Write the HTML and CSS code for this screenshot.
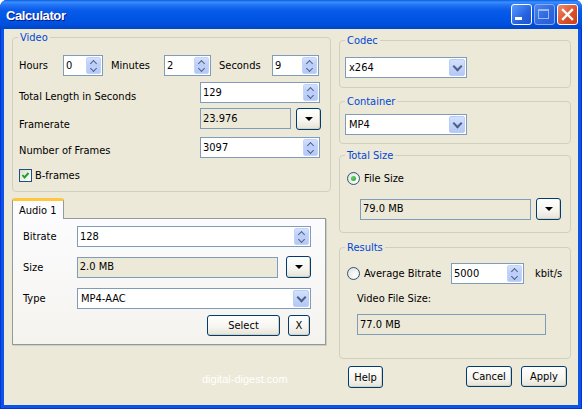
FILE: index.html
```html
<!DOCTYPE html>
<html lang="en">
<head>
    <meta charset="UTF-8">
    <title>Calculator</title>
    <link rel="stylesheet" href="styles.css">
</head>
<body>

<div class="window">
    <div class="titlebar">
        <span class="title">Calculator</span>
        <div class="caption">
            <span class="cap cap-min">
                <svg width="19" height="19" viewBox="0 0 19 19"><rect x="3" y="12" width="7" height="3" fill="#fff"/></svg>
            </span>
            <span class="cap cap-max">
                <svg width="19" height="19" viewBox="0 0 19 19"><rect x="3.5" y="4.5" width="10" height="9" fill="none" stroke="#9DB7F2"/><rect x="3" y="4" width="11" height="2" fill="#9DB7F2"/></svg>
            </span>
            <span class="cap cap-close">
                <svg width="19" height="19" viewBox="0 0 19 19"><path d="M5 5 L14 14 M14 5 L5 14" stroke="#fff" stroke-width="2.4" stroke-linecap="square"/></svg>
            </span>
        </div>
    </div>

    <div class="client">
        <div class="col-left">
            <fieldset class="group video">
                <legend>Video</legend>
                <div class="group-body">
                    <div class="row row-time">
                        <span class="lbl lbl-hours">Hours</span>
                        <div class="spin spin-hours"><span class="val">0</span><span class="spin-btns"><i class="up"></i><i class="down"></i></span></div>
                        <span class="lbl lbl-time">Minutes</span>
                        <div class="spin spin-time"><span class="val">2</span><span class="spin-btns"><i class="up"></i><i class="down"></i></span></div>
                        <span class="lbl lbl-time">Seconds</span>
                        <div class="spin spin-time"><span class="val">9</span><span class="spin-btns"><i class="up"></i><i class="down"></i></span></div>
                    </div>
                    <div class="row row-total">
                        <span class="lbl lbl-long">Total Length in Seconds</span>
                        <div class="spin spin-wide"><span class="val">129</span><span class="spin-btns"><i class="up"></i><i class="down"></i></span></div>
                    </div>
                    <div class="row row-fps">
                        <span class="lbl lbl-long">Framerate</span>
                        <div class="textbox disabled tb-fps">23.976</div>
                        <button class="btn drop"><span class="tri"></span></button>
                    </div>
                    <div class="row row-frames">
                        <span class="lbl lbl-long">Number of Frames</span>
                        <div class="spin spin-wide"><span class="val">3097</span><span class="spin-btns"><i class="up"></i><i class="down"></i></span></div>
                    </div>
                    <div class="row row-check">
                        <span class="check">
                            <svg width="11" height="11" viewBox="0 0 11 11"><path d="M2.5 5 L4.5 7.5 L8.5 3" fill="none" stroke="#21A121" stroke-width="2"/></svg>
                        </span>
                        <span>B-frames</span>
                    </div>
                </div>
            </fieldset>

            <div class="tabs">
                <div class="tab-strip"><span class="tab">Audio 1</span></div>
                <div class="tab-panel">
                    <div class="prow">
                        <span class="plbl">Bitrate</span>
                        <div class="spin spin-bitrate"><span class="val">128</span><span class="spin-btns"><i class="up"></i><i class="down"></i></span></div>
                    </div>
                    <div class="prow prow-size">
                        <span class="plbl">Size</span>
                        <div class="textbox disabled tb-size">2.0 MB</div>
                        <button class="btn drop"><span class="tri"></span></button>
                    </div>
                    <div class="prow prow-type">
                        <span class="plbl">Type</span>
                        <div class="combo combo-type"><span class="val">MP4-AAC</span><span class="combo-btn"></span></div>
                    </div>
                    <div class="prow prow-btns">
                        <button class="btn btn-select">Select</button>
                        <button class="btn btn-x">X</button>
                    </div>
                </div>
            </div>

            <div class="watermark">digital-digest.com</div>
        </div>

        <div class="col-right">
            <fieldset class="group codec">
                <legend>Codec</legend>
                <div class="group-body">
                    <div class="combo combo-main"><span class="val">x264</span><span class="combo-btn"></span></div>
                </div>
            </fieldset>

            <fieldset class="group container">
                <legend>Container</legend>
                <div class="group-body">
                    <div class="combo combo-main"><span class="val">MP4</span><span class="combo-btn"></span></div>
                </div>
            </fieldset>

            <fieldset class="group total">
                <legend>Total Size</legend>
                <div class="group-body">
                    <div class="radio-row">
                        <span class="radio on"></span>
                        <span>File Size</span>
                    </div>
                    <div class="row size-row">
                        <div class="textbox disabled tb-total">79.0 MB</div>
                        <button class="btn drop"><span class="tri"></span></button>
                    </div>
                </div>
            </fieldset>

            <fieldset class="group results">
                <legend>Results</legend>
                <div class="group-body">
                    <div class="radio-row bitrate-row">
                        <span class="radio"></span>
                        <span class="radio-text">Average Bitrate</span>
                        <div class="spin spin-abr"><span class="val">5000</span><span class="spin-btns"><i class="up"></i><i class="down"></i></span></div>
                        <span class="unit">kbit/s</span>
                    </div>
                    <div class="vfs-label">Video File Size:</div>
                    <div class="textbox disabled tb-vfs">77.0 MB</div>
                </div>
            </fieldset>

            <div class="dialog-buttons">
                <button class="btn btn-help">Help</button>
                <button class="btn btn-cancel">Cancel</button>
                <button class="btn btn-apply">Apply</button>
            </div>
        </div>
    </div>
</div>

</body>
</html>
```

FILE: styles.css
```css
* {
    box-sizing: border-box;
}

body {
    margin: 0;
    background: #ffffff;
    font-family: "DejaVu Sans Condensed", "DejaVu Sans", sans-serif;
    font-stretch: condensed;
    font-size: 11px;
    color: #000;
}

/* window frame */

.window {
    width: 582px;
    height: 409px;
    display: flex;
    flex-direction: column;
    background: #0B55E6;
    border-radius: 7px 7px 0 0;
    border: 1px solid #0831D9;
    border-top: none;
}

.titlebar {
    height: 29px;
    margin: 0 -1px;
    display: flex;
    align-items: center;
    padding: 0 4px 0 6px;
    border-radius: 7px 7px 0 0;
    background: linear-gradient(to bottom, #0A5CE0 0px, #3B8FFD 2px, #2274F5 5px, #0A5CEA 10px, #0055E6 18px, #0050DD 24px, #0047CE 28px);
}

.title {
    flex: 1;
    color: #fff;
    font-family: "Liberation Sans", Arial, sans-serif;
    font-weight: bold;
    font-size: 13px;
    letter-spacing: -0.4px;
    text-shadow: 1px 1px 0 #0A1883;
    padding-top: 1px;
}

.caption {
    display: flex;
    gap: 2px;
}

.cap {
    width: 21px;
    height: 21px;
    border: 1px solid #fff;
    border-radius: 3px;
    display: flex;
}

.cap-min {
    background: linear-gradient(135deg, #5A9BFF, #2663E0 60%, #1C55D0);
}

.cap-max {
    border-color: #8DAAF0;
    background: linear-gradient(135deg, #4C86F0, #2E66DE 60%, #2A5CD6);
}

.cap-close {
    background: linear-gradient(135deg, #ED8E6B, #DA4E27 60%, #C9401A);
}

.client {
    flex: 1;
    margin: 0 3px 3px;
    background: #ECE9D8;
    display: flex;
}

.col-left {
    width: 319px;
    margin-left: 8px;
    padding-top: 2px;
}

.col-right {
    width: 232px;
    margin-left: 8px;
    padding-top: 5px;
}

/* group boxes */

.group {
    border: 1px solid #D0D0BF;
    border-radius: 4px;
    margin: 0;
    padding: 0;
    min-width: 0;
}

.group legend {
    color: #0046D5;
    line-height: 13px;
    margin-left: 5px;
    padding: 0 2px;
}

.video .group-body {
    padding: 11px 6px 9px;
}

.row {
    display: flex;
    align-items: center;
}

.row-time {
    height: 21px;
}

.lbl-hours {
    width: 44px;
}

.lbl-time {
    width: 53px;
    margin-left: 8px;
}

.lbl-long {
    width: 181px;
}

.row-total,
.row-fps,
.row-frames {
    align-items: flex-start;
}

.row-total {
    margin-top: 6px;
}

.row-total .lbl {
    padding-top: 8px;
}

.row-fps {
    margin-top: 5px;
}

.row-fps .lbl {
    padding-top: 10px;
}

.row-frames {
    margin-top: 6px;
}

.row-frames .lbl {
    padding-top: 7px;
}

.row-check {
    margin-top: 11px;
    height: 13px;
    gap: 3px;
}

/* inputs */

.spin,
.combo,
.textbox {
    height: 21px;
    border: 1px solid #7F9DB9;
    background: #fff;
    display: flex;
}

.spin .val,
.combo .val {
    flex: 1;
    display: flex;
    align-items: center;
    padding: 0 0 1px 2px;
}

.combo .val {
    padding-left: 3px;
}

.textbox {
    align-items: center;
    padding: 0 0 1px 2px;
}

.textbox.disabled {
    background: #ECE9D8;
}

.spin-btns {
    width: 15px;
    margin: 1px;
    display: flex;
    flex-direction: column;
    border: 1px solid #C3D3FD;
    border-radius: 2px;
    background: linear-gradient(to bottom, #D3E0FD, #BACDF8 50%, #C0D2FA 51%, #B4C8F6);
}

.spin-btns i {
    flex: 1;
    display: flex;
    align-items: center;
    justify-content: center;
}

.spin-btns i::before {
    content: "";
    width: 4px;
    height: 4px;
    border-left: 1.5px solid #4D6185;
    border-top: 1.5px solid #4D6185;
    transform: rotate(45deg);
}

.spin-btns .up::before {
    margin-top: 3px;
}

.spin-btns .down::before {
    transform: rotate(225deg);
    margin-top: -3px;
}

.combo-btn {
    width: 16px;
    margin: 1px;
    border: 1px solid #BACCF7;
    border-radius: 2px;
    background: linear-gradient(to bottom, #D3E0FD, #B4C8F6);
    display: flex;
    align-items: center;
    justify-content: center;
}

.combo-btn::before {
    content: "";
    width: 5px;
    height: 5px;
    border-right: 2px solid #4D6185;
    border-bottom: 2px solid #4D6185;
    transform: rotate(45deg);
    margin-top: -3px;
}

.spin-hours {
    width: 40px;
}

.spin-time {
    width: 47px;
}

.spin-wide {
    width: 120px;
}

.tb-fps {
    width: 91px;
}

/* buttons */

.btn {
    font: inherit;
    color: #000;
    padding: 0;
    border: 1px solid #003C74;
    border-radius: 3px;
    background: linear-gradient(to bottom, #FFFFFF, #F5F4EF 60%, #E6E3D6);
    box-shadow: inset -1px -1px 0 #D8D2BD;
    height: 21px;
}

.btn.drop {
    width: 25px;
    height: 22px;
    margin-left: 5px;
    display: flex;
    align-items: center;
    justify-content: center;
}

.tri {
    width: 0;
    height: 0;
    border-left: 4px solid transparent;
    border-right: 4px solid transparent;
    border-top: 4px solid #000;
}

/* check and radio */

.check {
    width: 13px;
    height: 13px;
    border: 1px solid #1C5180;
    background: linear-gradient(135deg, #DCDCD7, #FFFFFF);
    display: flex;
}

.radio {
    width: 13px;
    height: 13px;
    border: 1px solid #2F5476;
    border-radius: 50%;
    background: radial-gradient(circle at 65% 65%, #FFFFFF, #DCDCD7);
    display: flex;
    align-items: center;
    justify-content: center;
}

.radio.on::after {
    content: "";
    width: 5px;
    height: 5px;
    border-radius: 50%;
    background: radial-gradient(circle at 35% 35%, #63D163, #21A121);
}

/* tab control */

.tabs {
    margin-top: 6px;
    width: 314px;
}

.tab-strip {
    display: flex;
}

.tab {
    position: relative;
    width: 52px;
    height: 21px;
    margin-bottom: -1px;
    padding: 2px 0 0 6px;
    line-height: 16px;
    border: 1px solid #919B9C;
    border-bottom: none;
    border-top: 3px solid #FFC83C;
    border-radius: 3px 3px 0 0;
    background: #FCFCFE;
}

.tab-panel {
    border: 1px solid #919B9C;
    background: linear-gradient(to bottom, #FCFCFE, #F4F3EE);
    padding: 7px 14px 8px 10px;
    box-shadow: 1px 1px 0 #D0CEBF;
}

.prow {
    display: flex;
    align-items: center;
}

.plbl {
    width: 54px;
}

.spin-bitrate {
    width: 234px;
}

.prow-size {
    margin-top: 9px;
}

.tb-size {
    width: 202px;
}

.prow-size .btn.drop {
    margin-left: 8px;
}

.prow-type {
    margin-top: 10px;
}

.combo-type {
    width: 234px;
}

.prow-btns {
    margin-top: 6px;
    justify-content: flex-end;
    padding-right: 1px;
}

.btn-select {
    width: 73px;
}

.btn-x {
    width: 22px;
    margin-left: 8px;
}

.watermark {
    margin-top: 28px;
    padding-left: 190px;
    line-height: 13px;
    color: #fff;
    font-family: "Liberation Sans", Arial, sans-serif;
    font-size: 11px;
}

/* right column */

.codec .group-body {
    padding: 10px 5px 9px;
}

.container {
    margin-top: 7px;
}

.container .group-body {
    padding: 6px 5px 8px;
}

.combo-main {
    width: 122px;
}

.total {
    margin-top: 5px;
}

.total .group-body {
    padding: 10px 9px 12px 7px;
}

.radio-row {
    display: flex;
    align-items: center;
    gap: 4px;
    height: 13px;
}

.size-row {
    margin-top: 13px;
    padding-left: 13px;
}

.tb-total {
    width: 171px;
}

.results {
    margin-top: 8px;
}

.results .group-body {
    padding: 9px 7px 23px;
}

.bitrate-row {
    height: 21px;
}

.radio-text {
    width: 83px;
}

.spin-abr {
    width: 73px;
}

.unit {
    margin-left: 7px;
}

.vfs-label {
    margin: 8px 0 0 10px;
    line-height: 13px;
}

.tb-vfs {
    width: 189px;
    margin: 9px 0 0 10px;
}

.dialog-buttons {
    display: flex;
    margin-top: 7px;
    padding: 0 4px 0 9px;
}

.btn-help {
    width: 35px;
    height: 22px;
}

.btn-cancel {
    width: 46px;
    margin-left: auto;
}

.btn-apply {
    width: 46px;
    margin-left: 9px;
}
```
